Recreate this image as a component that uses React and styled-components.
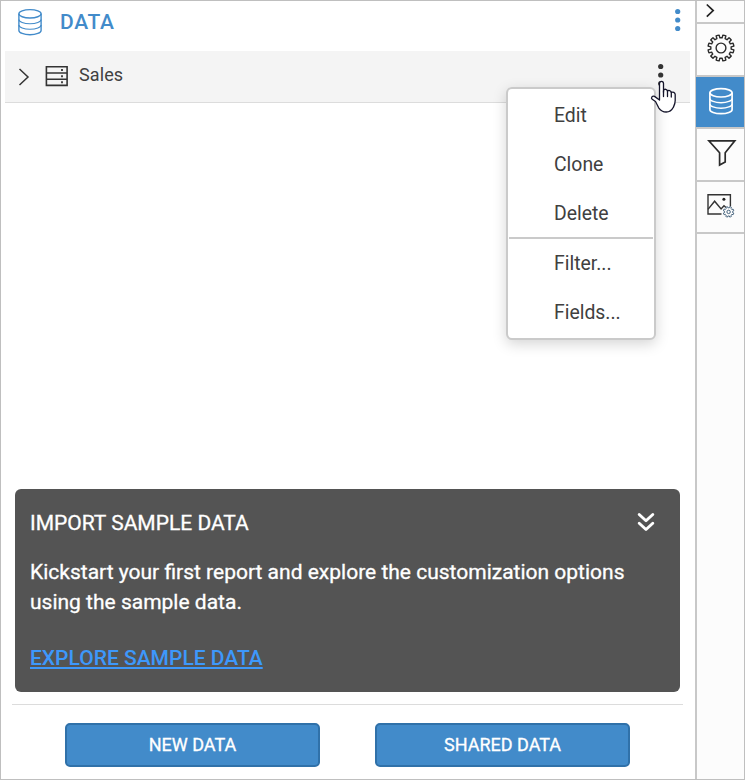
import React from "react";
import styled, { createGlobalStyle } from "styled-components";

const GlobalStyle = createGlobalStyle`
  * { box-sizing: border-box; }
  body { margin: 0; background: #fff; font-family: Roboto, sans-serif; }
  button { font-family: inherit; cursor: pointer; }
  svg { display: block; flex: none; }
`;

const Frame = styled.div`
  position: relative;
  display: flex;
  width: 745px;
  height: 780px;
  border: 1px solid #bfbfbf;
  background: #fff;
  overflow: hidden;
`;

const Panel = styled.main`
  display: flex;
  flex-direction: column;
  width: 694px;
`;

const Header = styled.header`
  display: flex;
  align-items: flex-start;
  height: 50px;
  padding: 7px 14px 0 16px;
`;

const Title = styled.h1`
  flex: 1;
  margin: 2px 0 0 17px;
  font-size: 21px;
  line-height: 24px;
  font-weight: 500;
  letter-spacing: 0.7px;
  color: #428bca;
`;

const DataRow = styled.div`
  display: flex;
  align-items: center;
  height: 52px;
  margin: 0 5px 0 4px;
  padding: 0 26px 2px 13px;
  background: #f4f4f4;
  border-bottom: 1px solid #dcdcdc;
`;

const RowToggle = styled.span`
  margin-right: 15px;
`;

const RowName = styled.span`
  flex: 1;
  margin: 0 0 2px 10px;
  font-size: 18px;
  line-height: 22px;
  letter-spacing: 0.1px;
  color: #404040;
`;

const Spacer = styled.div`
  flex: 1;
`;

const SampleCard = styled.section`
  height: 203px;
  margin: 0 15px 12px 14px;
  padding: 19px 24px 0 15px;
  border-radius: 6px;
  background: #545454;
  color: #fff;
  -webkit-text-stroke: 0.3px;
`;

const CardHeader = styled.div`
  display: flex;
  align-items: center;
  justify-content: space-between;
  height: 30px;
`;

const CardTitle = styled.h2`
  margin: 0;
  font-size: 21px;
  font-weight: 400;
`;

const CollapseIcon = styled.svg`
  margin-bottom: 2px;
`;

const CardText = styled.p`
  margin: 19px 0 26px;
  font-size: 21px;
  line-height: 30px;
  white-space: pre-line;
`;

const CardLink = styled.a`
  display: block;
  width: max-content;
  font-size: 21px;
  line-height: 30px;
  font-weight: 500;
  color: #3d98fb;
  -webkit-text-stroke: 0;
  text-decoration: underline;
  text-decoration-thickness: 2px;
  text-underline-offset: 2px;
  text-decoration-skip-ink: none;
`;

const Footer = styled.footer`
  display: flex;
  justify-content: space-between;
  height: 75px;
  margin: 0 12px 0 11px;
  padding: 18px 53px 0;
  border-top: 1px solid #dcdcdc;
`;

const ActionButton = styled.button`
  width: 255px;
  height: 44px;
  padding: 0;
  border: 2px solid #3071a9;
  border-radius: 5px;
  background: #428bca;
  color: #fff;
  font-size: 18px;
  line-height: 22px;
  -webkit-text-stroke: 0.3px;
`;

const Sidebar = styled.nav`
  display: flex;
  flex-direction: column;
  width: 49px;
  border-left: 2px solid #c8c8c8;
  background: #fcfcfc;
`;

const SideTab = styled.button`
  display: flex;
  align-items: center;
  justify-content: center;
  height: ${(p) => p.$height}px;
  margin-left: ${(p) => (p.$active ? "-1px" : "0")};
  padding: ${(p) => p.$padding || "0"};
  border: 0;
  border-bottom: 2px solid #c8c8c8;
  background: ${(p) => (p.$active ? "#428bca" : "#fcfcfc")};
`;

const Menu = styled.div`
  position: absolute;
  left: 505px;
  top: 86px;
  width: 150px;
  height: 253px;
  padding: 1px 1px;
  border: 2px solid #cacaca;
  border-radius: 6px;
  background: #fff;
  box-shadow: 0 4px 14px rgba(0, 0, 0, 0.17);
`;

const MenuGroup = styled.div`
  padding-top: ${(p) => p.$offset || 0}px;
  height: ${(p) => p.$rows * 49}px;
`;

const MenuItem = styled.div`
  height: 49px;
  padding-left: 45px;
  font-size: 19.4px;
  line-height: 49px;
  color: #404040;
`;

const Divider = styled.div`
  height: 2px;
  background: #cacaca;
`;

const Cursor = styled.svg`
  position: absolute;
  left: 649px;
  top: 78px;
`;

const Database = ({ color, stroke }) => (
  <svg width="26" height="28" viewBox="0 0 26 28" fill="none" stroke={color}>
    <ellipse cx="13" cy="5.8" rx="11.1" ry="4.2" strokeWidth={stroke} />
    <path d="M1.9 5.8V22.4c0 2.4 5 4.3 11.1 4.3s11.1-1.9 11.1-4.3V5.8" strokeWidth={stroke} />
    <path d="M1.9 11.4c0 2.4 5 4.3 11.1 4.3s11.1-1.9 11.1-4.3M1.9 16.9c0 2.4 5 4.3 11.1 4.3s11.1-1.9 11.1-4.3" strokeWidth={stroke * 0.8} />
  </svg>
);

const Dots = ({ color }) => (
  <svg width="6" height="25" fill={color}>
    <circle cx="2.7" cy="3.5" r="2.6" />
    <circle cx="2.7" cy="12" r="2.6" />
    <circle cx="2.7" cy="20.5" r="2.6" />
  </svg>
);

function gearPath(c, teeth, outer, inner) {
  const step = (Math.PI * 2) / teeth;
  const point = (r, a) => `${(c + r * Math.sin(a)).toFixed(2)} ${(c - r * Math.cos(a)).toFixed(2)}`;
  let d = "";
  for (let i = 0; i < teeth; i++) {
    const a = (i + 0.5) * step;
    d += `${i ? "L" : "M"}${point(inner, a - step * 0.29)}L${point(outer, a - step * 0.23)}`;
    d += `A${outer} ${outer} 0 0 1 ${point(outer, a + step * 0.23)}L${point(inner, a + step * 0.29)}`;
    d += `A${inner} ${inner} 0 0 1 ${point(inner, a + step * 0.71)}`;
  }
  return d + "Z";
}

const Gear = () => (
  <svg width="28" height="28" fill="none" stroke="#2b2b2b" strokeWidth="1.4" strokeLinejoin="round">
    <path d={gearPath(14, 12, 13, 10.2)} />
    <circle cx="14" cy="14" r="4.9" />
  </svg>
);

const Funnel = () => (
  <svg width="30" height="30" fill="none" stroke="#2b2b2b" strokeWidth="1.7">
    <path d="M1.9 2.9H27.8L18.2 14.8V24.1L12.6 27.1V14.8Z" />
  </svg>
);

const ImageSettings = () => (
  <svg width="30" height="26" fill="none" stroke="#333" strokeWidth="1.4">
    <path d="M15.5 21H2V1.7H24.4V13.5" />
    <path d="M2 16.4L8.6 8.2L15.1 16L18 12.8L20 14.5" />
    <circle cx="17.9" cy="6.3" r="1.5" fill="#222" stroke="none" />
    <g transform="translate(16.6 12.9)" stroke="#47657f" strokeWidth="1">
      <path d={gearPath(6, 8, 5.3, 4.1)} />
      <circle cx="6" cy="6" r="1.7" />
    </g>
  </svg>
);

const ServerTable = () => (
  <svg width="24" height="22" fill="none" stroke="#333" strokeWidth="1.6">
    <path d="M1.4 1.8H22.1V20.4H1.4ZM1.4 8H22.1M1.4 14.2H22.1" />
    <path d="M17 4v2M17 10.2v2M17 16.3v2" strokeWidth="1.8" />
  </svg>
);

export default function App() {
  return (
    <>
      <GlobalStyle />
      <Frame>
        <Panel>
          <Header>
            <Database color="#428bca" stroke={1.4} />
            <Title>DATA</Title>
            <Dots color="#428bca" />
          </Header>
          <DataRow>
            <RowToggle>
              <svg width="12" height="20" fill="none" stroke="#333" strokeWidth="1.5">
                <path d="M1.5 3L10 11L1.5 19" />
              </svg>
            </RowToggle>
            <ServerTable />
            <RowName>Sales</RowName>
            <Dots color="#333" />
          </DataRow>
          <Spacer />
          <SampleCard>
            <CardHeader>
              <CardTitle>IMPORT SAMPLE DATA</CardTitle>
              <CollapseIcon width="20" height="22" fill="none" stroke="#fff" strokeWidth="2.9" strokeLinecap="round" strokeLinejoin="round">
                <path d="M3.2 3.5L10 9.8L16.8 3.5M3.2 12.2L10 18.5L16.8 12.2" />
              </CollapseIcon>
            </CardHeader>
            <CardText>{"Kickstart your first report and explore the customization options\nusing the sample data."}</CardText>
            <CardLink>EXPLORE SAMPLE DATA</CardLink>
          </SampleCard>
          <Footer>
            <ActionButton>NEW DATA</ActionButton>
            <ActionButton>SHARED DATA</ActionButton>
          </Footer>
        </Panel>
        <Sidebar>
          <SideTab $height={23} $padding="0 21px 4px 0">
            <svg width="10" height="16" fill="none" stroke="#222" strokeWidth="1.7">
              <path d="M1.8 2.5L8.2 8.6L1.8 14.7" />
            </svg>
          </SideTab>
          <SideTab $height={53} $padding="0 0 3px">
            <Gear />
          </SideTab>
          <SideTab $active $height={52} $padding="0 0 2px 1px">
            <Database color="#fff" stroke={1.7} />
          </SideTab>
          <SideTab $height={53} $padding="0 0 3px 3px">
            <Funnel />
          </SideTab>
          <SideTab $height={52} $padding="0 0 2px">
            <ImageSettings />
          </SideTab>
        </Sidebar>
        <Menu>
          <MenuGroup $rows={3} $offset={1}>
            <MenuItem>Edit</MenuItem>
            <MenuItem>Clone</MenuItem>
            <MenuItem>Delete</MenuItem>
          </MenuGroup>
          <Divider />
          <MenuGroup $rows={2}>
            <MenuItem>Filter...</MenuItem>
            <MenuItem>Fields...</MenuItem>
          </MenuGroup>
        </Menu>
        <Cursor width="28" height="36" fill="#fff" stroke="#15152b" strokeWidth="1.3" strokeLinejoin="round" strokeLinecap="round">
          <path d="M9.5 21V4.6C9.5 1.5 13.5 1.5 13.5 4.6V13.2V11.4C14.5 9.4 17.2 10.2 17.5 12.2C18.5 10.8 21 11.5 21.3 13.5C22.8 12.4 25.2 13.5 25.2 15.6V21.5C25.2 25 24.2 26.5 23.2 28.5C21.5 31.8 19.3 33 16.2 33C12.5 33 10.6 31.5 8.7 28.8L5.5 22.5L2.2 20.2C0.5 18.6 2.4 16.4 4.5 17.4Z" />
          <path d="M13.5 12V17.5M17.5 12.2V17.5M21.3 13.5V18" />
        </Cursor>
      </Frame>
    </>
  );
}
